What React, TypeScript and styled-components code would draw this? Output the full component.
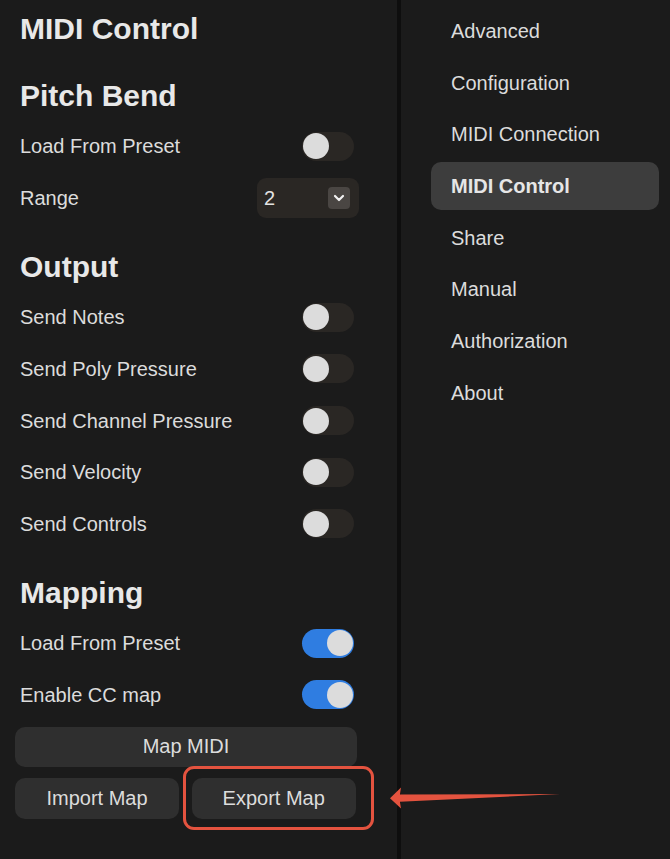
import styled, { createGlobalStyle } from "styled-components";

const GlobalStyles = createGlobalStyle`
  html, body {
    margin: 0;
    padding: 0;
    background: #1b1b1b;
  }
  body {
    font-family: "Liberation Sans", Arial, Helvetica, sans-serif;
    color: #dedede;
  }
`;

const navItems = [
  "Advanced",
  "Configuration",
  "MIDI Connection",
  "MIDI Control",
  "Share",
  "Manual",
  "Authorization",
  "About",
];

function Toggle({ on }: { on?: boolean }) {
  return (
    <Track $on={on}>
      <Knob $on={on} />
    </Track>
  );
}

function RangeSelect({ value }: { value: string }) {
  return (
    <SelectBox>
      <span>{value}</span>
      <Chevron>
        <svg width="12" height="8" viewBox="0 0 12 8">
          <path
            d="M2 2 L6 6 L10 2"
            fill="none"
            stroke="#f2f2f2"
            strokeWidth="2.2"
            strokeLinecap="round"
            strokeLinejoin="round"
          />
        </svg>
      </Chevron>
    </SelectBox>
  );
}

function App() {
  return (
    <>
      <GlobalStyles />
      <Page>
        <Settings>
          <Title>MIDI Control</Title>

          <Section>
            <Heading>Pitch Bend</Heading>
            <Row>
              <Label>Load From Preset</Label>
              <Toggle />
            </Row>
            <Row>
              <Label>Range</Label>
              <RangeSelect value="2" />
            </Row>
          </Section>

          <Section>
            <Heading>Output</Heading>
            <Row>
              <Label>Send Notes</Label>
              <Toggle />
            </Row>
            <Row>
              <Label>Send Poly Pressure</Label>
              <Toggle />
            </Row>
            <Row>
              <Label>Send Channel Pressure</Label>
              <Toggle />
            </Row>
            <Row>
              <Label>Send Velocity</Label>
              <Toggle />
            </Row>
            <Row>
              <Label>Send Controls</Label>
              <Toggle />
            </Row>
          </Section>

          <Section>
            <Heading>Mapping</Heading>
            <Row>
              <Label>Load From Preset</Label>
              <Toggle on />
            </Row>
            <Row>
              <Label>Enable CC map</Label>
              <Toggle on />
            </Row>
          </Section>

          <ButtonStack>
            <WideButton>Map MIDI</WideButton>
            <ButtonRow>
              <Button>Import Map</Button>
              <Highlighted>
                <Button>Export Map</Button>
                <Outline />
              </Highlighted>
            </ButtonRow>
          </ButtonStack>
        </Settings>

        <Divider />

        <Nav>
          {navItems.map((item) => (
            <NavItem key={item} $active={item === "MIDI Control"}>
              {item}
            </NavItem>
          ))}
        </Nav>

        <Arrow width="180" height="28" viewBox="0 0 180 28">
          <polygon
            points="4,14.3 15,3.6 14,10.4 174,10 14,17.8 15,24.4"
            fill="#e4533f"
          />
        </Arrow>
      </Page>
    </>
  );
}

const Page = styled.div`
  position: relative;
  display: flex;
  width: 670px;
  height: 859px;
  overflow: hidden;
  background: #1b1b1b;
`;

const Settings = styled.div`
  width: 397px;
  box-sizing: border-box;
  padding: 0 43px 0 20px;
  display: flex;
  flex-direction: column;
`;

const Title = styled.h1`
  margin: 0 0 13.5px;
  height: 57px;
  line-height: 58px;
  font-size: 30px;
  font-weight: 700;
  color: #e8e8e8;
`;

const Section = styled.section`
  display: flex;
  flex-direction: column;

  & + & {
    margin-top: 17.5px;
  }
`;

const Heading = styled.h2`
  margin: 0;
  height: 50px;
  padding-top: 1px;
  box-sizing: border-box;
  display: flex;
  align-items: center;
  font-size: 30px;
  font-weight: 700;
  color: #e8e8e8;
`;

const Row = styled.div`
  height: 51.7px;
  display: flex;
  align-items: center;
  justify-content: space-between;
`;

const Label = styled.span`
  padding-top: 1px;
  font-size: 20px;
  color: #dcdcdc;
`;

const Track = styled.div<{ $on?: boolean }>`
  position: relative;
  width: 52px;
  height: 29px;
  border-radius: 15px;
  background: ${({ $on }) => ($on ? "#2f7de1" : "#2a2724")};
  flex-shrink: 0;
`;

const Knob = styled.div<{ $on?: boolean }>`
  position: absolute;
  top: 1.5px;
  left: ${({ $on }) => ($on ? "24.5px" : "1px")};
  width: 26px;
  height: 26px;
  border-radius: 50%;
  background: #dcdcdc;
`;

const SelectBox = styled.div`
  margin-right: -5px;
  width: 102px;
  height: 40px;
  box-sizing: border-box;
  padding: 0 9px 0 7px;
  border-radius: 9px;
  background: #2a2724;
  display: flex;
  align-items: center;
  justify-content: space-between;
  font-size: 20px;
  color: #e2e2e2;
`;

const Chevron = styled.div`
  width: 22px;
  height: 22px;
  border-radius: 4px;
  background: #4a4643;
  display: flex;
  align-items: center;
  justify-content: center;
`;

const ButtonStack = styled.div`
  margin: 6px -3px 0 -5px;
  display: flex;
  flex-direction: column;
  gap: 11.3px;
`;

const Button = styled.div`
  height: 41px;
  border-radius: 10px;
  background: #2f2f2f;
  display: flex;
  align-items: center;
  justify-content: center;
  font-size: 20px;
  color: #dcdcdc;
`;

const WideButton = styled(Button)`
  height: 40px;
`;

const ButtonRow = styled.div`
  display: grid;
  grid-template-columns: 164px 164px;
  column-gap: 12.7px;
`;

const Highlighted = styled.div`
  position: relative;
`;

const Outline = styled.div`
  position: absolute;
  left: -9px;
  right: -18.3px;
  top: -11.6px;
  bottom: -10.7px;
  border: 3px solid #e4533f;
  border-radius: 11px;
  pointer-events: none;
`;

const Divider = styled.div`
  width: 4px;
  background: #0e0e0e;
`;

const Nav = styled.nav`
  flex: 1;
  padding: 7px 11px 0 30px;
  display: flex;
  flex-direction: column;
  gap: 3.7px;
`;

const NavItem = styled.div<{ $active?: boolean }>`
  height: 48px;
  padding: 1px 20px 0;
  box-sizing: border-box;
  border-radius: 10px;
  display: flex;
  align-items: center;
  font-size: 20px;
  font-weight: ${({ $active }) => ($active ? 700 : 400)};
  color: ${({ $active }) => ($active ? "#e6e6e6" : "#dcdcdc")};
  background: ${({ $active }) => ($active ? "#3d3d3d" : "transparent")};
`;

const Arrow = styled.svg`
  position: absolute;
  left: 386px;
  top: 784px;
`;

export default App;
